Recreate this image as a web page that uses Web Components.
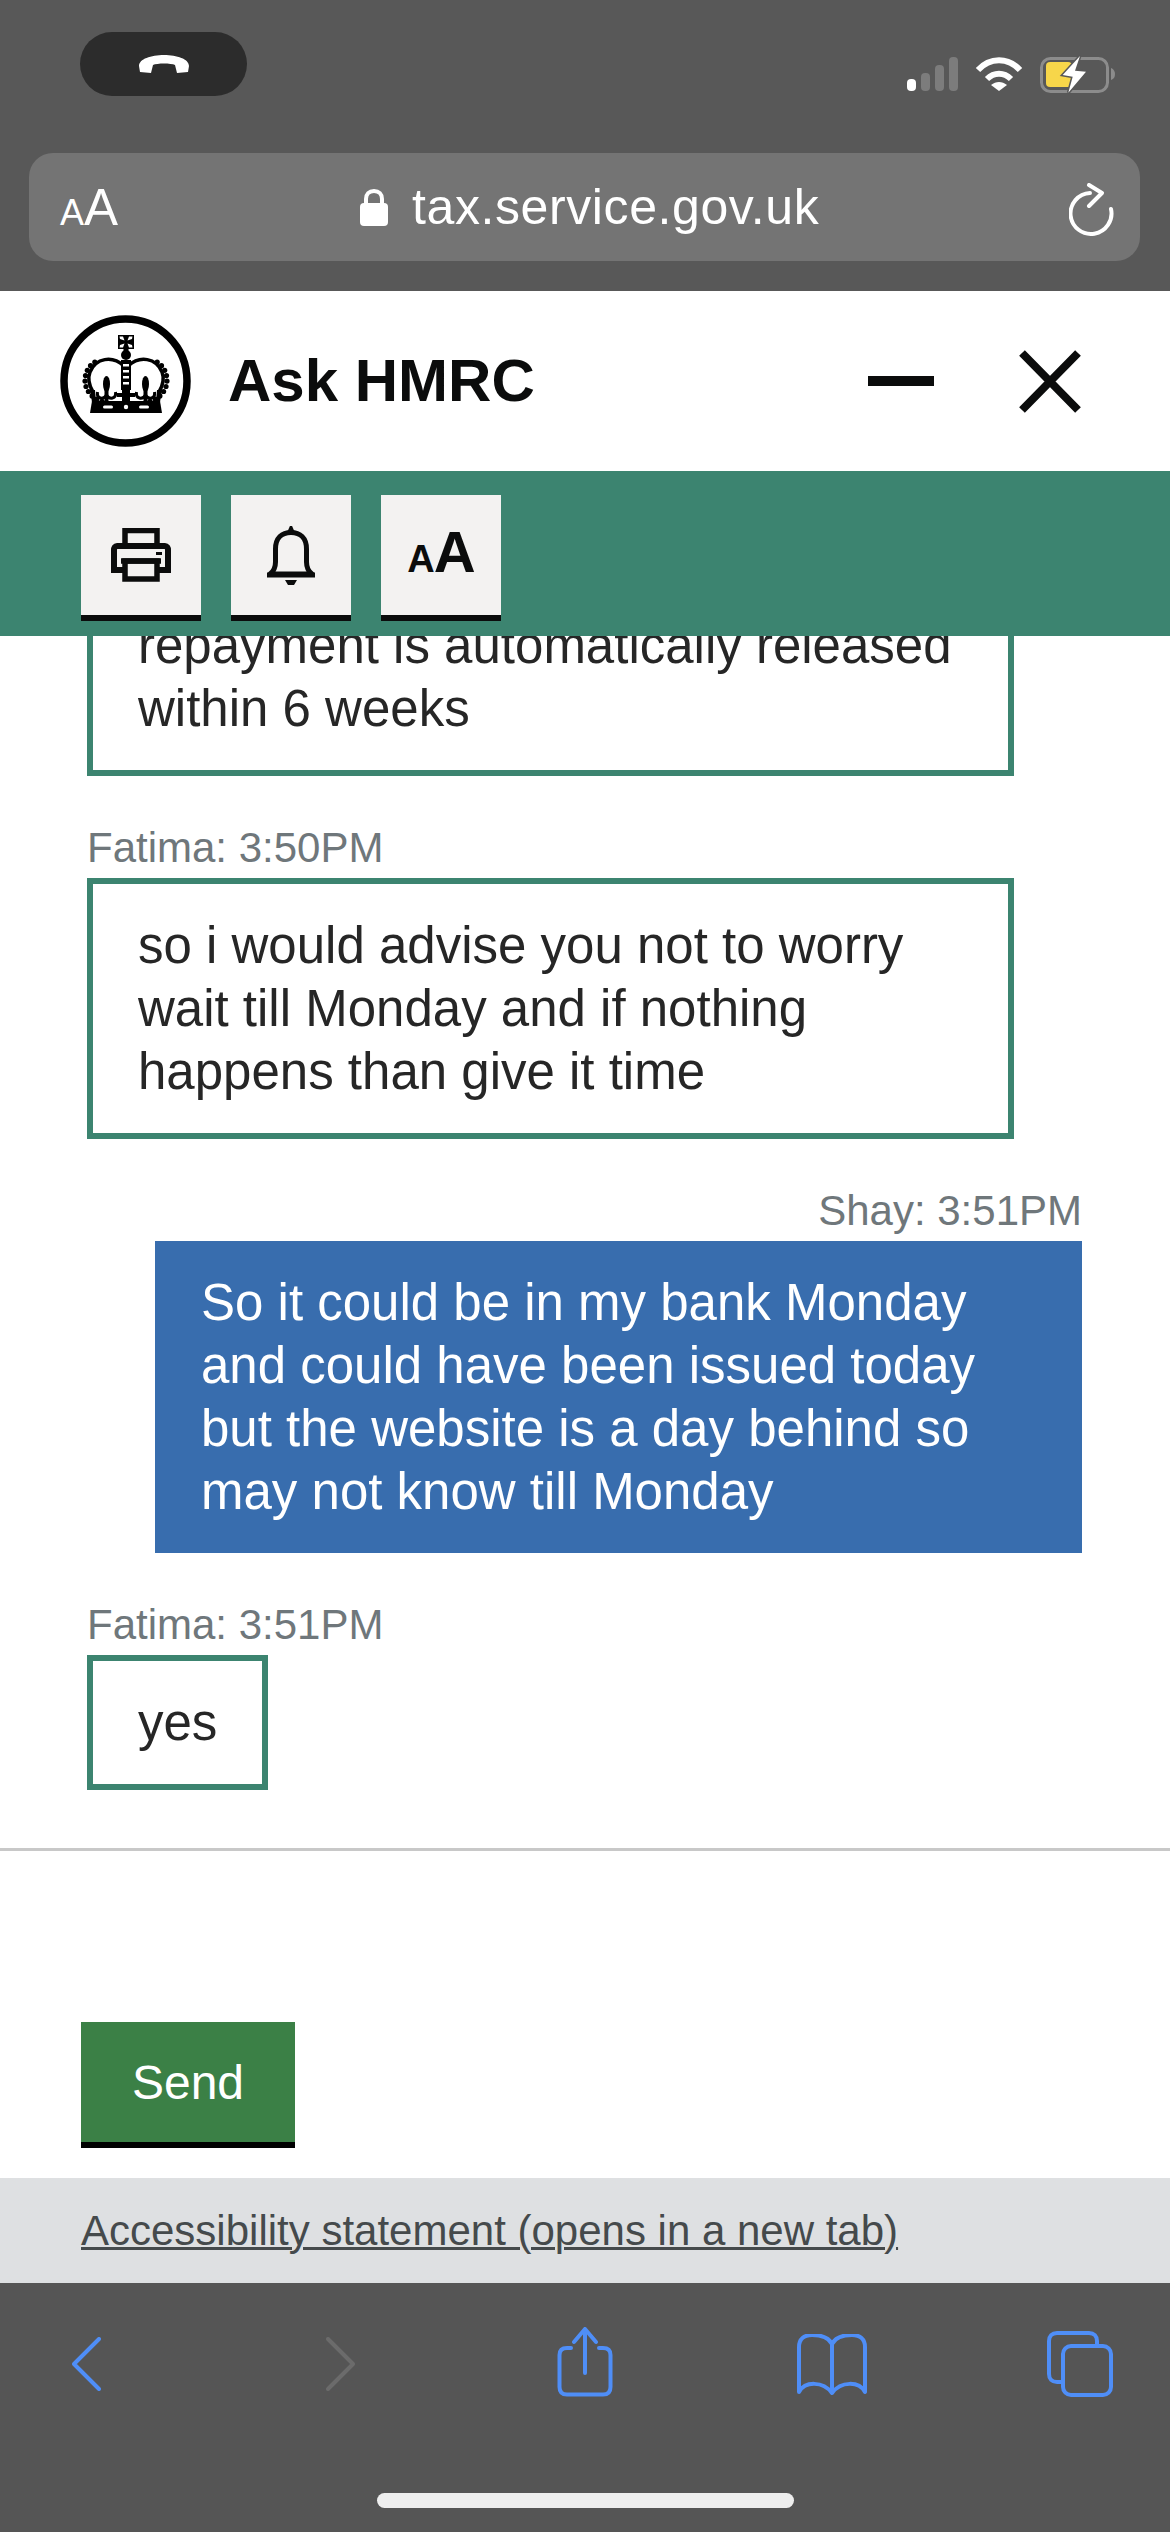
<!DOCTYPE html>
<html lang="en">
<head>
<meta charset="utf-8">
<title>Ask HMRC</title>
<style>
    html, body { margin: 0; padding: 0; background: #fff; }
    body { font-family: "Liberation Sans", Arial, sans-serif; }
    #page { display: flex; flex-direction: column; width: 1170px; height: 2532px; overflow: hidden; }
</style>
</head>
<body>
<div id="page">
    <browser-top url="tax.service.gov.uk"></browser-top>
    <chat-header title="Ask HMRC"></chat-header>
    <chat-tools></chat-tools>
    <chat-log>
        <chat-message who="">repayment is automatically released within 6 weeks</chat-message>
        <chat-message who="Fatima: 3:50PM">so i would advise you not to worry wait till Monday and if nothing happens than give it time</chat-message>
        <chat-message who="Shay: 3:51PM" mine>So it could be in my bank Monday and could have been issued today but the website is a day behind so may not know till Monday</chat-message>
        <chat-message who="Fatima: 3:51PM">yes</chat-message>
    </chat-log>
    <chat-composer></chat-composer>
    <chat-footer>Accessibility statement (opens in a new tab)</chat-footer>
    <browser-bottom></browser-bottom>
</div>

<script>
    class BrowserTop extends HTMLElement {
        constructor() {
            super()
            this.attachShadow({ mode: "open" })
        }

        connectedCallback() {
            this.shadowRoot.innerHTML = `
                <style>
                    :host { display: block; height: 291px; background: #585858; color: #fff; flex: none; }
                    #status { display: flex; align-items: flex-start; height: 153px; padding-left: 80px; box-sizing: border-box; }
                    #call { width: 167px; height: 64px; margin-top: 32px; border-radius: 32px; background: #2c2c2c; display: flex; align-items: center; justify-content: center; }
                    #signal { display: flex; align-items: flex-end; gap: 5px; height: 34px; margin: 57px 0 0 660px; }
                    #signal i { display: block; width: 9px; border-radius: 4px; background: #7c7c7c; }
                    #wifi { margin: 56px 0 0 17px; }
                    #battery { margin: 55px 0 0 17px; }
                    #pill { display: flex; align-items: center; height: 108px; margin: 0 30px 0 29px; border-radius: 24px; background: #747474; }
                    #aa { margin-left: 31px; width: 60px; white-space: nowrap; line-height: 1; margin-top: 0; }
                    #aa .s { font-size: 36px; }
                    #aa .b { font-size: 51px; }
                    #lock { margin-left: 240px; margin-top: 0; }
                    #url { margin-left: 24px; font-size: 50px; letter-spacing: 0.6px; line-height: 1; margin-top: 0; }
                    #reload { margin-left: auto; margin-right: 25px; margin-top: 6px; }
                </style>
                <div id="status">
                    <div id="call">
                        <svg width="50" height="18" viewBox="138 56 50 18"><path fill="#fff" d="M138 67C138 60 150 56 163 56C176 56 188 60 188 67L187 73L176 74L174 66C170 64 156 64 152 66L150 74L139 73Z"/></svg>
                    </div>
                    <div id="signal">
                        <i style="height:12px;background:#fff"></i><i style="height:18px"></i><i style="height:26px"></i><i style="height:34px"></i>
                    </div>
                    <svg id="wifi" width="48" height="35" viewBox="0 0 48 35">
                        <path d="M3 14C15 1 33 1 45 14" fill="none" stroke="#fff" stroke-width="6"/>
                        <path d="M12 23C19 16 29 16 36 23" fill="none" stroke="#fff" stroke-width="6"/>
                        <path d="M16 29C21 25 27 25 32 29L24 35Z" fill="#fff"/>
                    </svg>
                    <svg id="battery" width="76" height="40" viewBox="0 0 76 40">
                        <rect x="1.500" y="3.500" width="66" height="33" rx="9" fill="none" stroke="#8c8c8c" stroke-width="3"/>
                        <rect x="6" y="7" width="26" height="25" rx="4" fill="#f7d64a"/>
                        <path d="M71 13C74 14 75 17 75 19C75 22 74 24 71 25Z" fill="#8c8c8c"/>
                        <path d="M40 1L22.700 20L32.700 21.700L28.300 37.700L46 16.700L35 15.700Z" fill="#fff" stroke="#585858" stroke-width="3" paint-order="stroke"/>
                    </svg>
                </div>
                <div id="pill">
                    <div id="aa"><span class="s">A</span><span class="b">A</span></div>
                    <svg id="lock" width="28" height="38" viewBox="0 0 28 38">
                        <path d="M6 17V11C6 6 9 3 14 3C19 3 22 6 22 11V17" fill="none" stroke="#fff" stroke-width="4"/>
                        <rect x="0" y="15" width="28" height="23" rx="4" fill="#fff"/>
                    </svg>
                    <span id="url">${this.getAttribute("url")}</span>
                    <svg id="reload" width="46" height="54" viewBox="0 0 46 54">
                        <path d="M21 10A20.500 20.500 0 1 0 42 26" fill="none" stroke="#fff" stroke-width="4" stroke-linecap="round"/>
                        <path d="M20 2L33 10L20 23" fill="none" stroke="#fff" stroke-width="4" stroke-linecap="round" stroke-linejoin="round"/>
                    </svg>
                </div>
            `
        }
    }

    class ChatHeader extends HTMLElement {
        constructor() {
            super()
            this.attachShadow({ mode: "open" })
        }

        // beads round the two arches of the crown
        beads(cx, cy, from, to, count) {
            let out = ""
            for (let i = 0; i < count; i++) {
                const a = (from + (to - from) * i / (count - 1)) * Math.PI / 180
                out += `<circle cx="${(cx + 23 * Math.cos(a)).toFixed(1)}" cy="${(cy + 22 * Math.sin(a)).toFixed(1)}" r="2.600"/>`
            }
            return out
        }

        fleur(x) {
            return `
                <ellipse cx="${x}" cy="390" rx="3.500" ry="8" fill="#000"/>
                <rect x="${x - 2}" y="396" width="4" height="12" fill="#000"/>
                <path d="M${x - 9} 398C${x - 10} 405 ${x - 3} 406 ${x} 401C${x + 3} 406 ${x + 10} 405 ${x + 9} 398" fill="none" stroke="#000" stroke-width="3"/>
            `
        }

        connectedCallback() {
            this.shadowRoot.innerHTML = `
                <style>
                    :host { display: flex; align-items: center; height: 180px; padding-left: 60px; background: #fff; color: #0b0c0c; flex: none; box-sizing: border-box; }
                    h1 { margin: 0 0 0 37px; font-size: 60px; font-weight: 700; line-height: 1; }
                    #min { margin-left: auto; }
                    #close { margin: 0 88px 0 84px; }
                </style>
                <svg width="131" height="132" viewBox="60 321 131 132">
                    <ellipse cx="125.500" cy="387" rx="61.500" ry="62" fill="#fff" stroke="#000" stroke-width="7.500"/>
                    <g fill="#000">
                        <rect x="118" y="341" width="16" height="14"/>
                        <rect x="123.500" y="355" width="5" height="3"/>
                        <circle cx="126" cy="361" r="5"/>
                        <rect x="121" y="366" width="10" height="30"/>
                        ${this.beads(108, 386, 105, 235, 10)}
                        ${this.beads(144, 386, -55, 75, 10)}
                        <path d="M122 396H130V399H135V403H130V408H122V403H117V399H122Z"/>
                        <path d="M90 396L95 396L96 408H92Z"/>
                        <path d="M162 396L157 396L156 408H160Z"/>
                        <path d="M92 407H160L162 419H90Z"/>
                    </g>
                    ${this.fleur(106.500)}
                    ${this.fleur(145.500)}
                    <g fill="none" stroke="#000" stroke-width="3.500">
                        <path d="M124 372C112 361 96 364 90 378C87 386 90 393 93 398"/>
                        <path d="M128 372C140 361 156 364 162 378C165 386 162 393 159 398"/>
                    </g>
                    <g fill="#fff">
                        <path d="M119.500 342.500H123L124.500 346.500L120 345Z"/>
                        <path d="M132.500 342.500H129L127.500 346.500L132 345Z"/>
                        <path d="M119.500 353.500H123L124.500 349.500L120 351Z"/>
                        <path d="M132.500 353.500H129L127.500 349.500L132 351Z"/>
                        <rect x="123" y="370" width="6" height="2.500"/>
                        <rect x="123" y="376" width="6" height="2.500"/>
                        <rect x="123" y="382" width="6" height="2.500"/>
                        <rect x="123" y="388" width="6" height="2.500"/>
                        <rect x="103" y="411.500" width="10" height="3" rx="1.500"/>
                        <rect x="139" y="411.500" width="10" height="3" rx="1.500"/>
                        <circle cx="126" cy="413" r="2.200"/>
                    </g>
                </svg>
                <h1>${this.getAttribute("title")}</h1>
                <svg id="min" width="66" height="12" viewBox="0 0 66 12"><rect x="0" y="1" width="66" height="10" fill="#0b0c0c"/></svg>
                <svg id="close" width="64" height="65" viewBox="0 0 64 65"><path d="M4 4L60 61M60 4L4 61" fill="none" stroke="#0b0c0c" stroke-width="8"/></svg>
            `
        }
    }

    class ChatTools extends HTMLElement {
        constructor() {
            super()
            this.attachShadow({ mode: "open" })
        }

        connectedCallback() {
            this.shadowRoot.innerHTML = `
                <style>
                    :host { display: flex; gap: 30px; height: 165px; padding: 24px 0 0 81px; background: #3c8470; flex: none; box-sizing: border-box; }
                    button { display: flex; align-items: center; justify-content: center; width: 120px; height: 126px; padding: 0; border: 0; border-bottom: 6px solid #0b0c0c; background: #f3f2f1; color: #0b0c0c; box-sizing: border-box; font-family: "Liberation Sans", sans-serif; font-weight: 700; }
                    .aa { align-items: baseline; padding-top: 28px; letter-spacing: -1px; line-height: 1; }
                    .aa span:first-child { font-size: 38px; }
                    .aa span:last-child { font-size: 58px; }
                </style>
                <button aria-label="Print">
                    <svg width="60" height="54" viewBox="0 0 60 54">
                        <path d="M14 19V2.500H46V19" fill="none" stroke="#0b0c0c" stroke-width="5.500"/>
                        <path d="M12 42H3V22C3 20 4 18 6 18H54C56 18 57 20 57 22V42H48" fill="none" stroke="#0b0c0c" stroke-width="6"/>
                        <rect x="14" y="33" width="32" height="18" fill="#f3f2f1" stroke="#0b0c0c" stroke-width="5.500"/>
                        <path d="M10 33H50" stroke="#0b0c0c" stroke-width="5.500"/>
                        <rect x="45" y="24" width="6" height="3" fill="#0b0c0c"/>
                    </svg>
                </button>
                <button aria-label="Notifications">
                    <svg width="48" height="59" viewBox="0 0 48 59">
                        <path d="M21 7L24 0L27 7Z" fill="#0b0c0c" stroke="#0b0c0c" stroke-width="2"/>
                        <path d="M3 48C7 45 8.500 42 8.500 36V23C8.500 12 15 6.500 24 6.500C33 6.500 39.500 12 39.500 23V36C39.500 42 41 45 45 48Z" fill="none" stroke="#0b0c0c" stroke-width="5" stroke-linejoin="round"/>
                        <path d="M0 49H48" stroke="#0b0c0c" stroke-width="5"/>
                        <path d="M18 54H30L27 59H21Z" fill="#0b0c0c"/>
                    </svg>
                </button>
                <button class="aa" aria-label="Text size"><span>A</span><span>A</span></button>
            `
        }
    }

    class ChatLog extends HTMLElement {
        constructor() {
            super()
            this.attachShadow({ mode: "open" })
            this.shadowRoot.innerHTML = `
                <style>
                    :host { display: flex; flex-direction: column; justify-content: flex-end; flex: 1; min-height: 0; overflow: hidden; padding: 0 88px 58px 87px; border-bottom: 3px solid #c8c8c8; background: #fff; }
                </style>
                <slot></slot>
            `
        }
    }

    class ChatMessage extends HTMLElement {
        constructor() {
            super()
            this.attachShadow({ mode: "open" })
        }

        connectedCallback() {
            const who = this.getAttribute("who")
            this.shadowRoot.innerHTML = `
                <style>
                    :host { display: flex; flex-direction: column; align-items: flex-start; flex: none; margin-top: 48px; }
                    :host([mine]) { align-items: flex-end; }
                    #who { font-size: 42px; line-height: 48px; margin-bottom: 6px; color: #6f777b; }
                    #text { box-sizing: border-box; max-width: 927px; padding: 30px 45px; border: 6px solid #3c8470; background: #fff; color: #262626; font-size: 51px; line-height: 63px; }
                    :host([mine]) #text { border: 0; padding: 30px 46px; background: #386dae; color: #fff; min-width: 926px; }
                </style>
                ${who ? `<div id="who">${who}</div>` : ""}
                <div id="text"><slot></slot></div>
            `
        }
    }

    class ChatComposer extends HTMLElement {
        constructor() {
            super()
            this.attachShadow({ mode: "open" })
            this.shadowRoot.innerHTML = `
                <style>
                    :host { display: block; height: 327px; padding: 171px 0 0 81px; background: #fff; flex: none; box-sizing: border-box; }
                    button { display: block; width: 214px; height: 126px; padding: 0; border: 0; border-bottom: 6px solid #000; background: #3b8046; color: #fff; font-family: "Liberation Sans", sans-serif; font-size: 48px; box-sizing: border-box; }
                </style>
                <button>Send</button>
            `
        }
    }

    class ChatFooter extends HTMLElement {
        constructor() {
            super()
            this.attachShadow({ mode: "open" })
            this.shadowRoot.innerHTML = `
                <style>
                    :host { display: flex; align-items: center; height: 105px; padding-left: 81px; background: #dee0e2; flex: none; box-sizing: border-box; }
                    a { color: #454a4c; font-size: 42px; text-decoration: underline; text-decoration-thickness: 3px; }
                </style>
                <a href="#"><slot></slot></a>
            `
        }
    }

    class BrowserBottom extends HTMLElement {
        constructor() {
            super()
            this.attachShadow({ mode: "open" })
            this.shadowRoot.innerHTML = `
                <style>
                    :host { display: block; height: 249px; background: #555; flex: none; box-sizing: border-box; }
                    #icons { display: flex; align-items: flex-start; height: 210px; padding-left: 72px; box-sizing: border-box; }
                    svg { flex: none; fill: none; stroke: #4f8ef7; stroke-width: 4; stroke-linecap: round; stroke-linejoin: round; }
                    #home { width: 417px; height: 15px; margin-left: 377px; border-radius: 8px; background: #eee; }
                </style>
                <div id="icons">
                    <svg width="29" height="54" viewBox="0 0 29 54" style="margin-top:54px"><path d="M27 2L2 27L27 52"/></svg>
                    <svg width="29" height="54" viewBox="0 0 29 54" style="margin:54px 0 0 225px;stroke:#6b6b6b"><path d="M2 2L27 27L2 52"/></svg>
                    <svg width="56" height="70" viewBox="0 0 56 70" style="margin:44px 0 0 202px">
                        <path d="M14 21H10C5 21 2.500 23 2.500 28V60C2.500 65 5 67.500 10 67.500H46C51 67.500 53.500 65 53.500 60V28C53.500 23 51 21 46 21H42"/>
                        <path d="M28 46V3M17 15L28 2L39 15"/>
                    </svg>
                    <svg width="70" height="61" viewBox="0 0 70 61" style="margin:51px 0 0 184px">
                        <path d="M35 10C31 2 22 1 15 1C7 1 2 5 2 13V58C8 47 26 47 35 59C44 47 62 47 68 58V13C68 5 63 1 55 1C48 1 39 2 35 10ZM35 10V59"/>
                    </svg>
                    <svg width="66" height="66" viewBox="0 0 66 66" style="margin:48px 0 0 180px">
                        <path d="M14 51H10C5 51 2 48 2 43V10C2 5 5 2 10 2H42C47 2 50 5 50 10V14"/>
                        <rect x="16" y="15" width="48" height="49" rx="8"/>
                    </svg>
                </div>
                <div id="home"></div>
            `
        }
    }

    customElements.define("browser-top", BrowserTop)
    customElements.define("chat-header", ChatHeader)
    customElements.define("chat-tools", ChatTools)
    customElements.define("chat-log", ChatLog)
    customElements.define("chat-message", ChatMessage)
    customElements.define("chat-composer", ChatComposer)
    customElements.define("chat-footer", ChatFooter)
    customElements.define("browser-bottom", BrowserBottom)
</script>
</body>
</html>
